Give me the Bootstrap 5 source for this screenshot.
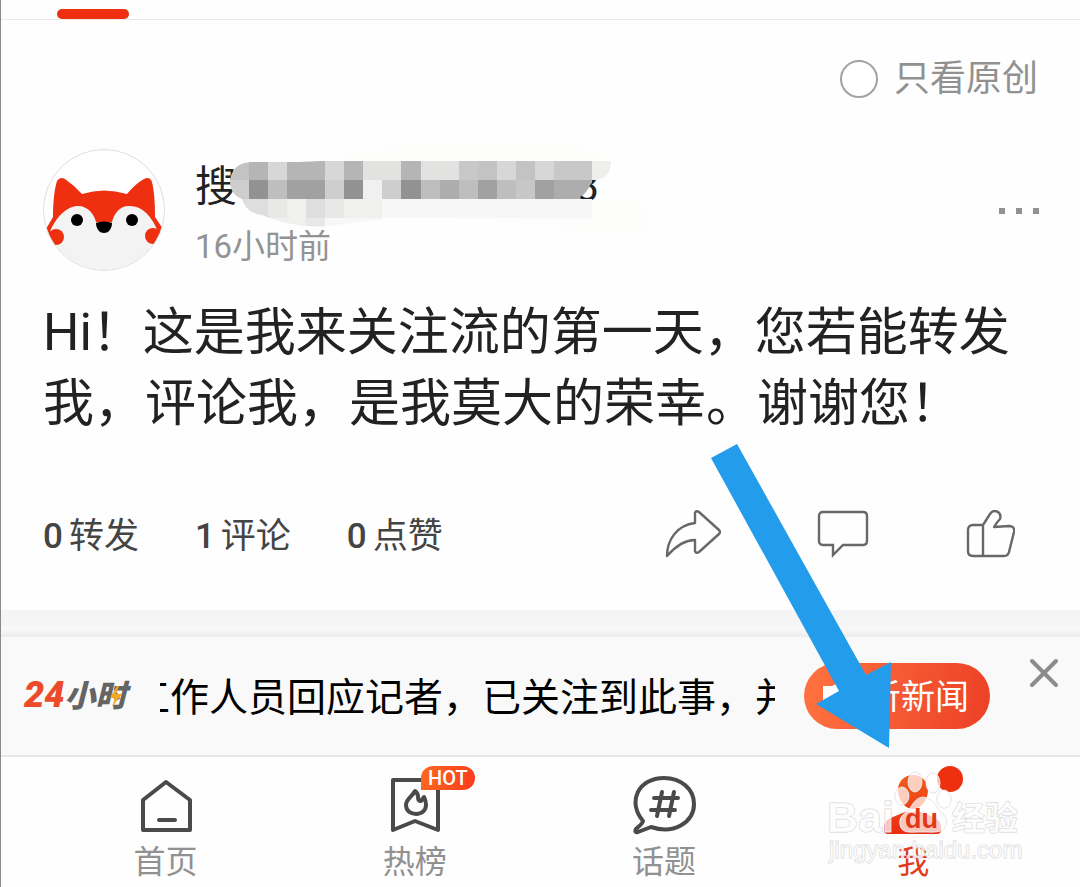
<!DOCTYPE html>
<html lang="zh-CN">
<head>
<meta charset="utf-8">
<meta name="viewport" content="width=device-width, initial-scale=1">
<title>关注流</title>
<link href="https://cdn.jsdelivr.net/npm/bootstrap@5.3.0/dist/css/bootstrap.min.css" rel="stylesheet">
<style>
  body { background: #fefefe; color: #222; font-family: Roboto, "Noto Sans CJK SC", sans-serif; }
  .app { border-left: 1px solid #8a8a8a; overflow: hidden; }
  .tab-strip { height: 20px; border-bottom: 1px solid #e9e9e9; padding: 9px 56px 0; }
  .tab-mark { width: 72px; height: 10px; border-radius: 5px; background: #ee2f10; }
  .filter-row { padding: 32px 42px 0; font-size: 36px; line-height: 54px; color: #919191; gap: 16px; }
  .filter-row .form-check-input { width: 38px; height: 38px; margin: 0; border: 2px solid #a2a2a2; background-color: #fff; }
  .post { padding: 43px 40px 46px 42px; }
  .avatar { width: 122px; height: 122px; flex: none; }
  .author { gap: 30px; }
  .author-name { width: 404px; height: 60px; font-size: 42px; line-height: 60px; margin: 8px 0 5px; font-weight: 400; }
  .mosaic { left: 33px; top: -14px; }
  .post-time { font-size: 33px; line-height: 50px; color: #939393; }
  .post-text { font-size: 51px; line-height: 71px; margin: 25px 0 71px; }
  .post-foot { font-size: 35px; line-height: 54px; color: #444; }
  .stat { color: inherit; text-decoration: none; display: flex; gap: 6px; }
  .stats { gap: 56px; }
  .stat-num { font-weight: 500; }
  .actions { gap: 96px; padding-right: 25px; }
  .plain { border: 0; background: none; padding: 0; display: flex; flex: none; }
  .band { height: 17px; background: #f5f5f5; }
  .band-shade { height: 10px; background: linear-gradient(#fafafa, #ececec); }
  .news { height: 118px; background: #f9f9f9; padding: 0 20px 0 23px; }
  .news-logo { width: 136px; font-size: 31px; line-height: 40px; font-weight: 900; font-style: italic; }
  .logo-num { color: #ec4a28; font-size: 36px; }
  .logo-word { color: #646464; }
  .logo-bolt { left: 86px; top: 11px; }
  .ticker { min-width: 0; overflow: hidden; padding-top: 3px; font-size: 39px; line-height: 60px; color: #000; white-space: nowrap; }
  .ticker-text { margin-left: -29px; }
  .listen { width: 186px; height: 66px; border-radius: 33px; border: 0; margin-left: 29px; padding: 2px 21px 0 16px; background: linear-gradient(100deg, #ff7340, #ec4026); color: #fff; font-size: 34px; line-height: 48px; flex: none; }
  .close-news { margin: 19px 0 0 38px; }
  .tabs { border-top: 2px solid #e6e6e6; padding: 18px 42px 2px 40px; background: #fefefe; }
  .tab { color: #919191; text-decoration: none; font-size: 32px; line-height: 46px; gap: 4px; }
  .tab.active { color: #e03c1c; }
  .hot { left: 38px; top: -9px; width: 54px; height: 24px; border-radius: 12px 12px 12px 0; background: linear-gradient(100deg, #f96a20, #fd3b1c); color: #fff; font-size: 20px; line-height: 24px; font-weight: 500; }
  .dot { left: 56px; top: -9px; width: 26px; height: 26px; background: #ee2f10; }
  .pointer { right: 189px; bottom: 139px; pointer-events: none; }
  .watermark { right: 52px; bottom: 16px; pointer-events: none; }
</style>
</head>
<body>
<div class="app position-relative">
  <header class="tab-strip"><div class="tab-mark"></div></header>

  <main>
    <div class="filter-row d-flex justify-content-end align-items-center">
      <input class="form-check-input" type="radio" id="original">
      <label for="original">只看原创</label>
    </div>

    <article class="post">
      <div class="author d-flex">
        <svg class="avatar" viewBox="0 0 122 122" aria-hidden="true">
          <defs><clipPath id="face"><circle cx="61" cy="61" r="60"/></clipPath></defs>
          <circle cx="61" cy="61" r="60.5" fill="#fff" stroke="#dedede"/>
          <g clip-path="url(#face)">
            <path d="M10 68C10 50 12 38 14 32Q17 27 22 30Q32 37 39 45Q61 38 84 45Q92 35 101 30Q107 27 109 33Q112 44 112 68L120 80L108 97H14L3 80Z" fill="#ee3010"/>
            <path d="M0 130L7 83C13 67 25 57 35 57C45 57 51 65 53 73Q61 76 69 73C71 64 78 56 87 57C99 57 109 67 115 83L122 130Z" fill="#f3f3f3"/>
            <circle cx="13" cy="88" r="8" fill="#ee3010"/><circle cx="110" cy="87" r="8" fill="#ee3010"/>
          </g>
          <circle cx="34" cy="71" r="6" fill="#000"/><circle cx="89" cy="71" r="6" fill="#000"/>
          <path d="M53 74Q61 71 69 74C69 79 66 84 61 84S53 79 53 74Z" fill="#000"/>
        </svg>
        <div class="flex-grow-1">
          <h2 class="author-name position-relative d-flex justify-content-between">
            <span>搜</span><span>3</span>
            <svg class="mosaic position-absolute" width="430" height="104" viewBox="228 143 430 104" aria-hidden="true">
              <defs><clipPath id="smear"><path d="M230 181C231 170 238 163 250 162L300 162L320 161H611C611 172 606 178 597 180C588 182 590 192 580 197L581 199H592V218H430C395 218 370 220 330 226C306 228 284 224 262 215C250 214 244 206 242 199C234 196 230 190 230 181Z"/></clipPath></defs>
              <path d="M320 161C400 140 500 130 570 143C615 151 612 164 605 172L597 179H320ZM430 200H630C650 200 660 230 635 235C580 236 520 218 430 218Z" fill="#fdfdfb"/>
              <g clip-path="url(#smear)" shape-rendering="crispEdges">
                <path fill="#c3c3c3" d="M230 161h19v19h-19zM478 161h19v19h-19zM516 161h19v19h-19z"/>
                <path fill="#b5b5b5" d="M249 161h19v19h-19zM287 161h38v19h-38zM344 161h19v19h-19zM401 161h20v19h-20z"/>
                <path fill="#d7d7d7" d="M268 161h19v19h-19zM325 161h19v19h-19zM497 161h19v19h-19zM535 161h19v19h-19z"/>
                <path fill="#e2e2e0" d="M363 161h38v19h-38zM421 161h38v19h-38z"/>
                <path fill="#c8c8c8" d="M459 161h19v19h-19zM554 161h38v19h-38z"/>
                <path fill="#eeeeec" d="M592 161h19v19h-19z"/>
                <path fill="#cecece" d="M230 180h19v19h-19zM325 180h19v19h-19zM382 180h19v19h-19z"/>
                <path fill="#929292" d="M249 180h19v19h-19zM344 180h19v19h-19zM401 180h20v19h-20z"/>
                <path fill="#bebebe" d="M268 180h19v19h-19zM421 180h19v19h-19zM459 180h19v19h-19zM497 180h19v19h-19z"/>
                <path fill="#a1a1a1" d="M287 180h38v19h-38zM478 180h19v19h-19zM535 180h19v19h-19z"/>
                <path fill="#adadad" d="M440 180h19v19h-19zM554 180h38v19h-38z"/>
                <path fill="#f0f0f0" d="M363 180h19v38h-19z"/>
                <path fill="#c7c7c7" d="M516 180h19v19h-19z"/>
                <path fill="#dedede" d="M240 199h28v19h-28zM306 199h19v19h-19z"/>
                <path fill="#e8e8e7" d="M268 199h19v19h-19zM325 199h19v19h-19zM306 218h19v10h-19z"/>
                <path fill="#f0f0ef" d="M287 199h19v28h-19zM344 199h38v19h-38zM262 218h25v9h-25z"/>
                <path fill="#f7f7f7" d="M382 199h210v19h-210zM325 218h57v9h-57z"/>
              </g>
            </svg>
          </h2>
          <div class="post-time">16小时前</div>
        </div>
        <button class="plain align-self-center" type="button" aria-label="更多">
          <svg width="42" height="8" fill="#929292" aria-hidden="true"><path d="M1 1h6v6H1zM18 1h6v6h-6zM35 1h6v6h-6z"/></svg>
        </button>
      </div>

      <p class="post-text">Hi！这是我来关注流的第一天，您若能转发我，评论我，是我莫大的荣幸。谢谢您！</p>

      <div class="post-foot d-flex justify-content-between align-items-start">
        <div class="stats d-flex">
          <a class="stat" href="#"><span class="stat-num">0</span><span>转发</span></a>
          <a class="stat" href="#"><span class="stat-num">1</span><span>评论</span></a>
          <a class="stat" href="#"><span class="stat-num">0</span><span>点赞</span></a>
        </div>
        <div class="actions d-flex">
          <button class="plain" type="button" aria-label="转发">
            <svg width="56" height="50" fill="none" stroke="#686868" stroke-width="2.4" stroke-linejoin="round" aria-hidden="true"><path d="M30 13V3Q31 0 34 2L54 20Q56 22 54 24L34 42Q31 44 30 41V30Q16 30 2 46C2 30 12 15 30 13Z"/></svg>
          </button>
          <button class="plain" type="button" aria-label="评论">
            <svg width="52" height="50" fill="none" stroke="#686868" stroke-width="2.4" aria-hidden="true"><path d="M6 2H46Q50 2 50 6V31Q50 35 46 35H26L16 45V35H6Q2 35 2 31V6Q2 2 6 2Z"/></svg>
          </button>
          <button class="plain" type="button" aria-label="点赞">
            <svg width="50" height="50" fill="none" stroke="#686868" stroke-width="2.4" stroke-linejoin="round" aria-hidden="true"><path d="M18 15H8Q3 15 3 20V41Q3 46 8 46H39Q43 46 44 42L49 22Q50 16 44 16L29 17Q32 12 35 9C37 2 29-2 25 4L18 15V46"/></svg>
          </button>
        </div>
      </div>
    </article>
  </main>

  <div class="band"></div>
  <div class="band-shade"></div>

  <footer class="position-relative">
    <section class="news d-flex align-items-center">
      <div class="news-logo position-relative flex-shrink-0"><span class="logo-num">24</span><span class="logo-word">小时</span>
        <svg class="logo-bolt position-absolute" width="12" height="22" aria-hidden="true"><path d="M7 0L0 12H5L2 21L12 8H6L9 0Z" fill="#f8a61c"/></svg>
      </div>
      <div class="ticker flex-grow-1"><div class="ticker-text">工作人员回应记者，已关注到此事，并</div></div>
      <button class="listen d-flex align-items-center justify-content-between" type="button">
        <svg width="36" height="30" aria-hidden="true"><path d="M3 4H12L20 0V30L12 24H3Z" fill="#fff"/></svg><span>听新闻</span>
      </button>
      <button class="plain close-news align-self-start" type="button" aria-label="关闭">
        <svg width="32" height="32" stroke="#8b8b8b" stroke-width="4" stroke-linecap="round" aria-hidden="true"><path d="M4 5L28 29M28 5L4 29"/></svg>
      </button>
    </section>

    <nav class="tabs d-flex">
      <a class="tab col d-flex flex-column align-items-center" href="#">
        <svg width="64" height="60" fill="none" stroke="#4a4a4a" stroke-width="4" stroke-linejoin="round" stroke-linecap="round" aria-hidden="true"><path d="M32 7L56 25V55H9V25ZM25 45H41"/></svg>
        <span>首页</span>
      </a>
      <a class="tab col d-flex flex-column align-items-center" href="#">
        <span class="position-relative d-flex">
          <svg width="64" height="60" fill="none" stroke="#4a4a4a" stroke-width="4" stroke-linejoin="round" aria-hidden="true"><path d="M10 5H55V55L32 46L10 55Z"/><path d="M32 16C29 22 23 24 23 30C23 36 28 39 33 39C39 39 43 35 43 30Q43 26 41 22L38 26Q35 26 35 22Q35 18 32 16Z"/></svg>
          <span class="hot position-absolute text-center">HOT</span>
        </span>
        <span>热榜</span>
      </a>
      <a class="tab col d-flex flex-column align-items-center" href="#">
        <svg width="64" height="60" fill="none" stroke="#4a4a4a" stroke-width="4" stroke-linejoin="round" stroke-linecap="round" aria-hidden="true"><path d="M11 46C-5 27 6 3 32 3C49 3 62 14 62 29C62 47 42 60 19 52L6 57Q2 58 4 54Q11 48 11 46Z"/><path d="M30 17L25 41M42 17L37 41M22 23H46M19 35H43"/></svg>
        <span>话题</span>
      </a>
      <a class="tab active col d-flex flex-column align-items-center" href="#">
        <span class="position-relative d-flex">
          <svg width="64" height="60" aria-hidden="true"><defs><linearGradient id="warm" x1="0" y1="0" x2="0" y2="1"><stop stop-color="#f45b1b"/><stop offset="1" stop-color="#ea2e12"/></linearGradient></defs><path d="M32 0C41 0 47 7 47 15C47 25 40 34 32 34S17 25 17 15C17 7 23 0 32 0ZM3 55Q2 45 12 42L24 37H40L52 42Q61 45 60 55Q60 59 56 59H7Q3 59 3 55Z" fill="url(#warm)"/></svg>
          <span class="dot position-absolute rounded-circle"></span>
        </span>
        <span>我</span>
      </a>
    </nav>

    <svg class="watermark position-absolute" width="204" height="104" viewBox="824 767 204 104" font-family="'Liberation Sans', 'Noto Sans CJK SC', sans-serif" fill="#fff" fill-opacity=".72" stroke="#d6d6d6" stroke-width="1" paint-order="stroke">
      <text x="827" y="832" font-size="43" font-weight="700">Bai</text>
      <ellipse cx="915" cy="782" rx="7" ry="10"/><ellipse cx="933" cy="783" rx="7" ry="10"/>
      <ellipse cx="902" cy="796" rx="7" ry="9"/><ellipse cx="944" cy="799" rx="7" ry="9"/>
      <path d="M910 808Q922 787 936 806C939 812 948 815 946 824C944 834 934 832 922 832S902 834 900 825C898 815 907 813 910 808Z"/>
      <text x="905" y="828" font-size="27" font-weight="700" fill="#e13818" fill-opacity="1" stroke="none">du</text>
      <text x="952" y="830" font-size="33" font-weight="700">经验</text>
      <text x="829" y="858" font-size="24">jingyan.baidu.com</text>
    </svg>
    <svg class="pointer position-absolute" width="181" height="305" viewBox="710 443 181 305" aria-hidden="true"><path d="M711 458L737 444L866 675L891 662L889 748L816 704L839 691Z" fill="#249cec"/></svg>
  </footer>
</div>
<script src="https://cdn.jsdelivr.net/npm/bootstrap@5.3.0/dist/js/bootstrap.bundle.min.js"></script>
</body>
</html>
